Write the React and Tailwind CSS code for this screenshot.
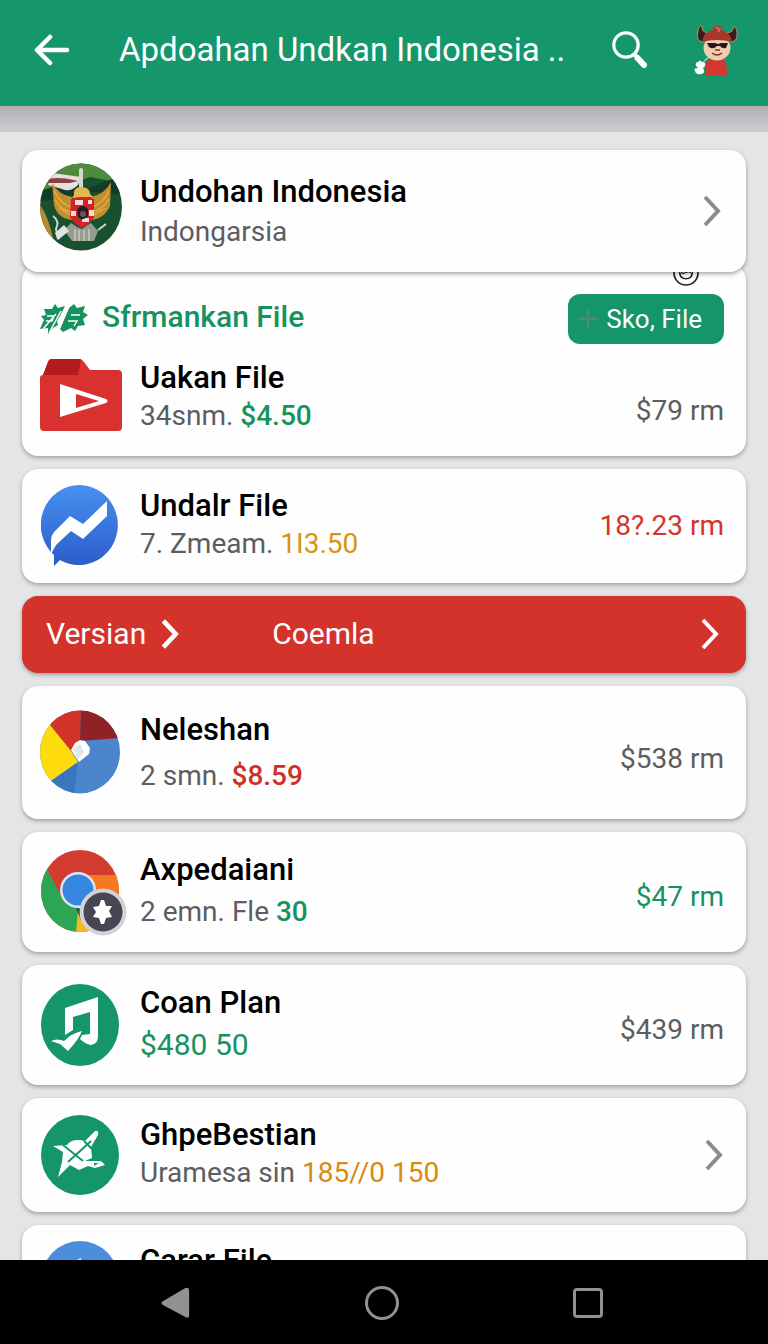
const TITLE = "text-[31px] leading-9 font-medium text-black whitespace-nowrap";
const SUB = "text-[28px] leading-10 text-[#5c5d60] whitespace-nowrap";

function Chevron({ className, stroke = 4 }) {
  return (
    <svg viewBox="0 0 20 34" fill="none" stroke="currentColor" strokeWidth={stroke} className={className} aria-hidden="true">
      <path d="M3 3 L16 17 L3 31" />
    </svg>
  );
}

function BackArrow() {
  return (
    <svg viewBox="0 0 36 32" className="h-8 w-9" fill="none" stroke="currentColor" strokeWidth="4.500" strokeLinecap="round" strokeLinejoin="round" aria-hidden="true">
      <path d="M16 3 L3 16 L16 29 M4 16 H33" />
    </svg>
  );
}

function SearchIcon() {
  return (
    <svg viewBox="0 0 36 38" className="h-[38px] w-9" fill="none" stroke="currentColor" aria-hidden="true">
      <circle cx="14" cy="14" r="12.200" strokeWidth="3.200" />
      <path d="M22 23 L25 26" strokeWidth="4" />
      <path d="M25.500 27 L32 34" strokeWidth="6" strokeLinecap="round" />
    </svg>
  );
}

function Mascot() {
  return (
    <svg viewBox="0 0 44 52" className="h-[52px] w-11" aria-hidden="true">
      <path d="M14 35 H29 Q33 36 33 51 H11 Q11 38 14 35Z" fill="#d2382f" />
      <path d="M10 37 L15 33" stroke="#9fe0c8" strokeWidth="1.300" />
      <path d="M2 42 Q1 38 4 38 Q6 35 8 38 Q11 37 11 40 Q12 42 9 44 Q12 49 7 50 Q2 51 1 47 Q-1 44 4 44Z" fill="#f4fffb" />
      <ellipse cx="23" cy="24" rx="13.500" ry="12.500" fill="#f0cdb0" />
      <path d="M10 18 Q1 18 4 7 Q5 1 8 2 Q7 9 16 9Z M36 18 Q44 18 43 8 Q42 2 39 3 Q40 9 31 9Z" fill="#3b1e1c" stroke="#c8a57c" strokeWidth="0.800" />
      <path d="M8 18 Q10 7 19 6 L20 2 H27 L28 6 Q36 8 38 18 Q23 14 8 18Z" fill="#a6392f" />
      <path d="M21 3 L26 5 L24 8" stroke="#d8725d" strokeWidth="1.500" fill="none" />
      <path d="M13 19 H21 L24 20 L27 19 H34 L32 24 Q28 25 26 22 H23 Q19 26 15 23Z" fill="#251a1c" />
      <path d="M18 29 Q23 33 28 29 M21 26 H26" stroke="#7d3928" strokeWidth="1.500" fill="none" />
    </svg>
  );
}

function Garuda() {
  return (
    <svg viewBox="0 0 82 88" className="-mt-2 h-[88px] w-[82px] shrink-0" aria-hidden="true">
      <defs>
        <clipPath id="emblem"><ellipse cx="41" cy="44" rx="41" ry="43.500" /></clipPath>
      </defs>
      <g clipPath="url(#emblem)">
        <rect width="82" height="88" fill="#17512f" />
        <path d="M0 0 H82 V20 L50 14 L26 22 L0 32Z" fill="#4f8a3d" />
        <path d="M0 28 L26 20 L50 25 L82 12 V31 L48 29 L24 36 L0 38Z" fill="#123c28" />
        <path d="M12 10 Q27 12 41 14 L38 22 Q30 30 22 26 L8 22Z" fill="#e7dedd" />
        <path d="M8 16 Q20 13 38 18 L30 20 L8 20Z" fill="#8a4146" />
        <rect x="39" y="5" width="4" height="24" rx="2" fill="#d5d8cc" />
        <path d="M0 42 Q9 54 14 80 L0 77Z" fill="#b58a32" />
        <path d="M12 20 Q19 32 32 34 L35 57 Q18 57 14 42Z M71 19 Q65 31 51 34 L48 57 Q64 57 70 43Z" fill="#c48d2c" />
        <path d="M14 27 Q20 42 34 45 M15 36 Q20 48 34 49 M19 45 L34 54 M69 27 Q64 41 50 45 M69 36 Q62 48 50 49 M66 45 L49 54" stroke="#dfae4e" strokeWidth="1.300" fill="none" />
        <path d="M34 32 Q33 24 41 24 Q50 24 50 31 L53 34 L32 35Z" fill="#e4b84f" />
        <path d="M31 36 Q41 32 54 36 L54 54 Q50 62 42 65 Q34 61 30 54Z" fill="#d2222a" />
        <path d="M35 37 H43 V42 H35Z M48 37 H52 V41 H48Z M31 48 H36 V53 H31Z M49 47 H54 V53 H49Z M42 55 H49 V59 H42Z" fill="#f0ded8" />
        <path d="M37 46 Q42 40 48 46 L48 53 Q43 59 38 54Z" fill="#251f23" />
        <circle cx="43" cy="51" r="3" fill="#6c5551" />
        <path d="M24 67 L31 60 L37 64 L42 66 L51 60 L58 68 L54 78 H32Z" fill="#969c91" />
        <path d="M35 66 V78 M39 67 V78 M44 67 V78 M49 66 V78" stroke="#cfd0c4" strokeWidth="1.300" />
        <path d="M13 53 Q20 58 16 66 L18 76 M58 67 L66 61" stroke="#c8d8d0" strokeWidth="2" fill="none" />
        <path d="M15 70 L24 62 L29 68 L18 77Z" fill="#dfe6e2" />
      </g>
    </svg>
  );
}

function LeafMark() {
  return (
    <svg viewBox="0 0 48 32" className="h-8 w-12 shrink-0" fill="#16925f" aria-hidden="true">
      <path d="M4 6 L12 6 L15 1 L18 5 L25 3 L20 13 L17 18 L18 22 L13 25 L8 31 L8 25 L0 26 L4 17 L1 13 L6 12Z" />
      <path d="M29 5 L34 1 L37 5 L45 3 L43 9 L48 12 L43 16 L45 22 L38 23 L35 28 L31 25 L23 29 L20 26Z" />
      <path d="M7 13 H14 L12 18 H6 M3 26 L16 11 M9 30 L21 8 M18 29 L28 5 M31 12 H40 M28 18 H37 L34 23" stroke="#fff" strokeWidth="1.400" fill="none" />
    </svg>
  );
}

function FolderIcon() {
  return (
    <svg viewBox="0 0 82 72" className="h-[72px] w-[82px] shrink-0" aria-hidden="true">
      <path d="M3 16 L8 3 Q9 0 12 0 H39 Q42 0 44 3 L50 11 H78 Q82 11 82 15 V68 Q82 72 78 72 H4 Q0 72 0 68 V19 Q0 16 3 16Z" fill="#d93030" />
      <path d="M3 16 L8 3 Q9 0 12 0 H41 L38 16Z" fill="#b51b1c" />
      <path fillRule="evenodd" d="M20 25 L66 40 Q69 42 66 44 L20 58Z M36 35 V49 L59 42Z" fill="#fff" />
    </svg>
  );
}

function BoltIcon() {
  return (
    <svg viewBox="0 0 78 82" className="h-[82px] w-[78px] shrink-0" aria-hidden="true">
      <defs><linearGradient id="sky" x2="0" y2="1"><stop stopColor="#4790f1" /><stop offset="1" stopColor="#2c5cc8" /></linearGradient></defs>
      <path d="M39 0 A39 40 0 1 1 19 75 L13 81 V70 A39 40 0 0 1 39 0Z" fill="url(#sky)" />
      <path d="M10 56 Q10 50 14 46 L29 31 L42 39 L66 16 V31 L42 54 L30 46 L15 60 L10 69Z" fill="#fff" />
    </svg>
  );
}

function WheelIcon() {
  return (
    <svg viewBox="0 0 80 84" className="h-[84px] w-20 shrink-0" aria-hidden="true">
      <defs><clipPath id="wheel"><ellipse cx="40" cy="42" rx="40" ry="41.500" /></clipPath></defs>
      <g clipPath="url(#wheel)">
        <rect width="80" height="84" fill="#4c85cc" />
        <path d="M0 0 H41 L40 31 L31 41Z M0 0 L31 41 L10 15Z" fill="#d4332a" />
        <path d="M41 0 H80 V28 L40 31Z" fill="#902127" />
        <path d="M0 3 L10 15 L31 41 L38 52 L11 71 L0 80Z" fill="#fddb0c" />
        <path d="M11 71 L38 52 L34 84 H0Z" fill="#3976bd" />
      </g>
      <path d="M31 40 L35 33 L40 30 L45 31 L50 38 L49 44 L39 52Z" fill="#fff" />
      <path d="M33 40 L40 33 L44 42 L38 49Z" fill="#e5e8eb" />
    </svg>
  );
}

function BrowserIcon() {
  return (
    <svg viewBox="0 0 80 88" className="h-[88px] w-20 shrink-0 overflow-visible" aria-hidden="true">
      <defs><clipPath id="browser"><ellipse cx="40" cy="43" rx="39" ry="41" /></clipPath></defs>
      <g clipPath="url(#browser)">
        <rect width="80" height="86" fill="#d33d31" />
        <path d="M38 27 H80 V86 H36Z" fill="#f37922" />
        <path d="M0 0 L9 25 L22 50 L39 62 L36 86 H0Z" fill="#2da653" />
        <path d="M38 60 L36 86 H55 L44 57Z" fill="#f5b91d" />
        <path d="M36 60 L43 61 L41 72Z" fill="#194d48" />
      </g>
      <circle cx="38" cy="42" r="18" fill="#d9e5f2" />
      <circle cx="38" cy="42" r="15.500" fill="#3486df" />
      <circle cx="63" cy="64" r="23.500" fill="#d2d2d7" />
      <circle cx="63" cy="64" r="19.500" fill="#484653" />
      <path d="M61 52 H64 L66 58 L72 58 L69 63 L72 69 L66 70 L64 76 H61 L59 70 L53 69 L56 64 L53 59 L59 58Z" fill="#fff" />
    </svg>
  );
}

function MusicIcon() {
  return (
    <svg viewBox="0 0 78 82" className="h-[82px] w-[78px] shrink-0" aria-hidden="true">
      <ellipse cx="39" cy="41" rx="39" ry="41" fill="#15966a" />
      <path d="M24 24 L57 13 V52 Q57 60 50 61 Q44 60 39 55 L41 51 L49 50 V28 L32 33 V46 L24 51Z" fill="#fff" />
      <path d="M10 57 Q16 54 23 57 Q31 49 41 47 Q38 55 27 67 L19 60Z" fill="#fff" />
    </svg>
  );
}

function BirdIcon() {
  return (
    <svg viewBox="0 0 78 80" className="h-20 w-[78px] shrink-0" aria-hidden="true">
      <ellipse cx="39" cy="40" rx="39" ry="40" fill="#15966a" />
      <path d="M12 31 L26 30 Q31 23 44 26 L54 16 Q58 15 57 20 L50 32 L51 43 L44 46 L60 46 L64 50 L54 53 L47 51 L38 55 L29 50 L17 62 L21 47 L22 37Z" fill="#fff" />
      <path d="M22 30 L42 46 M27 47 L50 26 M43 26 L51 34" stroke="#15966a" strokeWidth="2" fill="none" />
      <path d="M53 48 L58 48 L53 51Z" fill="#15966a" />
    </svg>
  );
}

function BlueIcon() {
  return (
    <svg viewBox="0 0 78 80" className="h-20 w-[78px] shrink-0" aria-hidden="true">
      <ellipse cx="39" cy="40" rx="39" ry="40" fill="#4b8fdc" />
      <path d="M36 19 L40 17 V28 L34 40Z" fill="#e5f1ff" />
    </svg>
  );
}

function Row({ icon, title, children, value, tone = "text-[#5c5d60]", pad = "py-4", text = "", valuePad = "" }) {
  return (
    <article className={`flex shrink-0 items-center rounded-2xl bg-[#fefefe] pr-[22px] pl-[18px] shadow-[0_2px_4px_rgba(0,0,0,0.3)] ${pad}`}>
      <div className="flex w-20 shrink-0 justify-center">{icon}</div>
      <div className={`ml-5 flex min-h-[76px] grow flex-col ${text}`}>
        <h2 className={TITLE}>{title}</h2>
        {children && <p className={SUB}>{children}</p>}
      </div>
      {value && <div className={`text-[28px] leading-9 whitespace-nowrap ${tone} ${valuePad}`}>{value}</div>}
    </article>
  );
}

export default function App() {
  return (
    <div className="flex h-screen flex-col overflow-hidden bg-[#e3e5e6] font-[Roboto,sans-serif]">
      <header className="flex h-[106px] shrink-0 items-center bg-[#16966b] pr-[30px] pb-[6px] pl-[34px] text-white">
        <button aria-label="Back"><BackArrow /></button>
        <h1 className="ml-[49px] grow text-[33px] leading-10 whitespace-nowrap">Apdoahan Undkan Indonesia ..</h1>
        <button aria-label="Search"><SearchIcon /></button>
        <button aria-label="Profile" className="ml-[46px]"><Mascot /></button>
      </header>
      <div className="h-[26px] shrink-0 bg-linear-to-b from-[#adaeb1] to-[#cecfd1]" />

      <main className="flex min-h-0 grow flex-col gap-[13px] overflow-hidden px-[22px] pt-[18px]">
        <div className="shrink-0">
          <section className="relative z-10 flex h-[122px] items-center rounded-2xl bg-[#fefefe] pr-6 pl-[18px] shadow-[0_2px_4px_rgba(0,0,0,0.35)]">
            <Garuda />
            <div className="ml-[18px] flex grow flex-col gap-[2px] pt-1">
              <h2 className={TITLE}>Undohan Indonesia</h2>
              <p className={SUB}>Indongarsia</p>
            </div>
            <button aria-label="Open" className="text-[#8a8b8e]"><Chevron className="h-[34px] w-5" /></button>
          </section>
          <section className="relative -mt-2 rounded-2xl bg-[#fefefe] pt-2 pr-[22px] pb-5 pl-[18px] shadow-[0_2px_4px_rgba(0,0,0,0.3)]">
            <svg viewBox="0 0 26 26" className="absolute -top-1 right-[47px] size-[26px]" fill="none" stroke="#222" strokeWidth="1.700" aria-hidden="true">
              <circle cx="13" cy="13" r="12" />
              <path d="M6 10 Q7 19 13 19 Q19 19 20 10" strokeWidth="1.200" />
              <ellipse cx="13" cy="15" rx="6" ry="3.500" strokeWidth="1.200" />
              <path d="M9 14 L17 11" strokeWidth="1.200" />
            </svg>
            <div className="flex items-center pt-[22px]">
              <LeafMark />
              <h2 className="ml-[14px] grow pb-1 text-[30px] leading-9 font-medium text-[#16925f]">Sfrmankan File</h2>
              <button className="flex h-[50px] items-center gap-2 rounded-xl bg-[#14966a] pr-[22px] pl-[10px] text-[26px] text-white">
                <svg viewBox="0 0 20 20" className="size-5" stroke="#4b8a74" strokeWidth="2.500" aria-hidden="true"><path d="M10 0 V20 M0 10 H20" /></svg>
                Sko, File
              </button>
            </div>
            <div className="flex items-center pt-[10px]">
              <FolderIcon />
              <div className="ml-[18px] grow pt-[6px]">
                <h3 className={TITLE}>Uakan File</h3>
                <p className={SUB}>34snm. <span className="font-medium text-[#16925f]">$4.50</span></p>
              </div>
              <span className="pt-8 text-[28px] leading-9 text-[#5c5d60]">$79 rm</span>
            </div>
          </section>
        </div>

        <Row icon={<BoltIcon />} title="Undalr File" value="18?.23 rm" tone="text-[#d4342c]">
          7. Zmeam. <span className="text-[#d9950f]">1I3.50</span>
        </Row>

        <nav aria-label="Versions" className="flex h-[77px] shrink-0 items-center rounded-2xl bg-[#d4332c] pr-[26px] pb-[2px] pl-6 text-[30px] text-white shadow-[0_2px_4px_rgba(0,0,0,0.3)]">
          <button className="flex items-center gap-[14px]">Versian <Chevron className="h-[32px] w-5" stroke={5} /></button>
          <button className="ml-[92px]">Coemla</button>
          <button aria-label="Next" className="ml-auto"><Chevron className="h-[34px] w-5" /></button>
        </nav>

        <Row icon={<WheelIcon />} title="Neleshan" value="$538 rm" pad="pt-[22px] pb-[23px]" text="gap-2 pt-1" valuePad="pt-[14px]">
          2 smn. <span className="font-medium text-[#cf3026]">$8.59</span>
        </Row>
        <Row icon={<BrowserIcon />} title="Axpedaiani" value="$47 rm" tone="text-[#16925f]" text="gap-1" valuePad="pt-[10px]">
          2 emn. Fle <span className="font-medium text-[#16925f]">30</span>
        </Row>
        <Row icon={<MusicIcon />} title="Coan Plan" value="$439 rm" pad="py-[19px]" text="gap-1" valuePad="pt-[10px]">
          <span className="text-[30px] text-[#16925f]">$480 50</span>
        </Row>
        <Row icon={<BirdIcon />} title="GhpeBestian" value={<Chevron className="h-[34px] w-5" />} tone="text-[#8a8b8e]" pad="py-[17px]">
          Uramesa sin <span className="text-[#d98a0d]">185//0 150</span>
        </Row>
        <Row icon={<BlueIcon />} title="Carar File" />
      </main>

      <nav aria-label="System" className="flex h-[84px] shrink-0 items-center bg-black pt-[2px] text-[#929092]">
        <button aria-label="Back" className="ml-[161px]"><svg viewBox="0 0 32 34" className="h-[34px] w-[30px]" fill="currentColor"><path d="M2 15 L26 1 Q30 0 30 4 V30 Q30 34 26 32 L2 19 Q-1 17 2 15Z" /></svg></button>
        <button aria-label="Home" className="mx-auto size-[34px] rounded-full border-3 border-current" />
        <button aria-label="Recent apps" className="mr-[165px] size-[30px] rounded-sm border-3 border-current" />
      </nav>
    </div>
  );
}
